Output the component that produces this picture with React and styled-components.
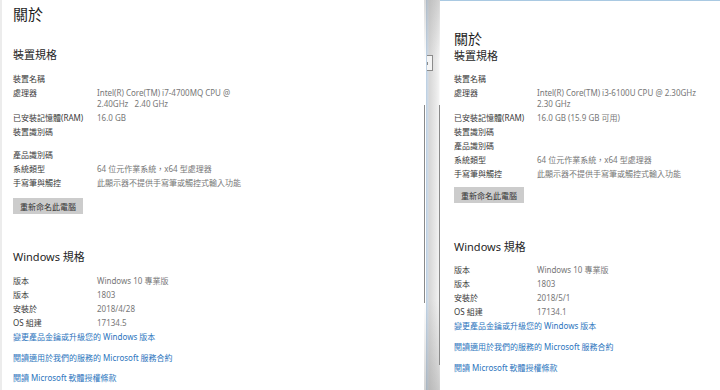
import React from "react";
import styled, { createGlobalStyle } from "styled-components";

const Global = createGlobalStyle`
  html, body { margin: 0; padding: 0; background: #fff; }
  body { font-family: "Noto Sans", "Noto Sans CJK TC", sans-serif; }
  * { box-sizing: border-box; }
`;

const Screen = styled.div`
  display: flex;
  width: 720px;
  height: 390px;
  overflow: hidden;
  background: #fff;
`;

const Panel = styled.div`
  width: ${(p) => p.$width};
  flex: ${(p) => (p.$grow ? 1 : "none")};
  height: 100%;
  display: flex;
  flex-direction: column;
  align-items: flex-start;
  padding-left: ${(p) => p.$pl}px;
  background: #fff;
  border-left: ${(p) => (p.$edge ? "2px solid #ececec" : "none")};
  border-top: ${(p) => (p.$top ? "1px solid #a9c9e2" : "none")};
  color: #333;
  font-family: "Noto Sans", "Noto Sans CJK TC", sans-serif;
`;

const Title = styled.div`
  margin-top: ${(p) => p.$mt}px;
  font-size: ${(p) => p.$size}px;
  line-height: 20px;
  color: #1f1f1f;
  font-family: "Noto Sans CJK TC", sans-serif;
`;

const Heading = styled.div`
  margin-top: ${(p) => p.$mt}px;
  font-size: 11px;
  line-height: 14px;
  color: #262626;
  white-space: nowrap;
`;

const RowList = styled.div`
  margin-top: ${(p) => p.$mt}px;
  display: flex;
  flex-direction: column;
  gap: 3px;
`;

const Row = styled.div`
  display: grid;
  grid-template-columns: ${(p) => p.$label}px auto;
  margin-top: ${(p) => p.$extra || 0}px;
  font-size: 8px;
  line-height: 11px;
  min-height: 11px;
  white-space: nowrap;
`;

const Label = styled.span`
  color: #3a3a3a;
`;

const Value = styled.span`
  color: #777;
  display: flex;
  flex-direction: column;
`;

const RenameButton = styled.div`
  margin-top: ${(p) => p.$mt}px;
  width: 70px;
  height: 16px;
  display: flex;
  align-items: center;
  justify-content: center;
  background: #cccccc;
  color: #333;
  font-size: 8px;
  white-space: nowrap;
`;

const Link = styled.div`
  margin-top: ${(p) => p.$mt}px;
  font-size: 8px;
  line-height: 11px;
  color: #2a74bd;
  white-space: nowrap;
`;

const Divider = styled.div`
  position: relative;
  width: 16px;
  height: 100%;
  flex: none;
  background:
    linear-gradient(to bottom, rgba(150,150,150,0.35) 0, rgba(150,150,150,0) 60px, rgba(150,150,150,0) 300px, rgba(130,130,130,0.35) 390px),
    linear-gradient(to right, #ffffff 0, #ffffff 2px, #b7cde2 2px, #d3dde8 4px, #d6d6d6 5px, #e9e9e9 12px, #f3f3f3 15px, #ffffff 16px);
`;

const Rail = styled.div`
  position: absolute;
  left: ${(p) => p.$x}px;
  top: ${(p) => p.$top}px;
  height: ${(p) => p.$h}px;
  width: 1px;
  background: #8a8a8a;
`;

const Grip = styled.div`
  position: absolute;
  left: 3px;
  top: 55px;
  width: 6px;
  height: 16px;
  border: 1px solid #8c8c8c;
  border-left: none;
  background: #f4f4f4;
  &::after {
    content: "";
    position: absolute;
    left: 0;
    top: 6px;
    width: 1px;
    height: 3px;
    background: #8c8c8c;
  }
`;

const Spec = ({ label, col, extra, children }) => (
  <Row $label={col} $extra={extra}>
    <Label>{label}</Label>
    <Value>{children}</Value>
  </Row>
);

export default function App() {
  return (
    <>
      <Global />
      <Screen>
        <Panel $width="424px" $pl={11} $edge>
          <Title $mt={4} $size={15}>關於</Title>
          <Heading $mt={24}>裝置規格</Heading>
          <RowList $mt={10.5}>
            <Spec col={84} label="裝置名稱" />
            <Spec col={84} label="處理器">
              <span>Intel(R) Core(TM) i7-4700MQ CPU @</span>
              <span>2.40GHz&nbsp;&nbsp;&nbsp;2.40 GHz</span>
            </Spec>
            <Spec col={84} label="已安裝記憶體(RAM)">16.0 GB</Spec>
            <Spec col={84} label="裝置識別碼" />
            <Spec col={84} label="產品識別碼" extra={9} />
            <Spec col={84} label="系統類型">64 位元作業系統，x64 型處理器</Spec>
            <Spec col={84} label="手寫筆與觸控">此顯示器不提供手寫筆或觸控式輸入功能</Spec>
          </RowList>
          <RenameButton $mt={10.5}>重新命名此電腦</RenameButton>
          <Heading $mt={36}>Windows 規格</Heading>
          <RowList $mt={10.5}>
            <Spec col={84} label="版本">Windows 10 專業版</Spec>
            <Spec col={84} label="版本">1803</Spec>
            <Spec col={84} label="安裝於">2018/4/28</Spec>
            <Spec col={84} label="OS 組建">17134.5</Spec>
          </RowList>
          <Link $mt={3}>變更產品金鑰或升級您的 Windows 版本</Link>
          <Link $mt={10}>閱讀適用於我們的服務的 Microsoft 服務合約</Link>
          <Link $mt={9}>閱讀 Microsoft 軟體授權條款</Link>
        </Panel>
        <Divider>
          <Rail $x={0} $top={105} $h={198} />
          <Rail $x={15} $top={105} $h={260} />
          <Grip />
        </Divider>
        <Panel $grow $pl={14} $top>
          <Title $mt={27} $size={14}>關於</Title>
          <Heading $mt={1}>裝置規格</Heading>
          <RowList $mt={9.5}>
            <Spec col={83} label="裝置名稱" />
            <Spec col={83} label="處理器">
              <span>Intel(R) Core(TM) i3-6100U CPU @ 2.30GHz</span>
              <span>2.30 GHz</span>
            </Spec>
            <Spec col={83} label="已安裝記憶體(RAM)">16.0 GB (15.9 GB 可用)</Spec>
            <Spec col={83} label="裝置識別碼" />
            <Spec col={83} label="產品識別碼" />
            <Spec col={83} label="系統類型">64 位元作業系統，x64 型處理器</Spec>
            <Spec col={83} label="手寫筆與觸控">此顯示器不提供手寫筆或觸控式輸入功能</Spec>
          </RowList>
          <RenameButton $mt={8.5}>重新命名此電腦</RenameButton>
          <Heading $mt={37}>Windows 規格</Heading>
          <RowList $mt={9.5}>
            <Spec col={83} label="版本">Windows 10 專業版</Spec>
            <Spec col={83} label="版本">1803</Spec>
            <Spec col={83} label="安裝於">2018/5/1</Spec>
            <Spec col={83} label="OS 組建">17134.1</Spec>
          </RowList>
          <Link $mt={3}>變更產品金鑰或升級您的 Windows 版本</Link>
          <Link $mt={10}>閱讀適用於我們的服務的 Microsoft 服務合約</Link>
          <Link $mt={10}>閱讀 Microsoft 軟體授權條款</Link>
        </Panel>
      </Screen>
    </>
  );
}
